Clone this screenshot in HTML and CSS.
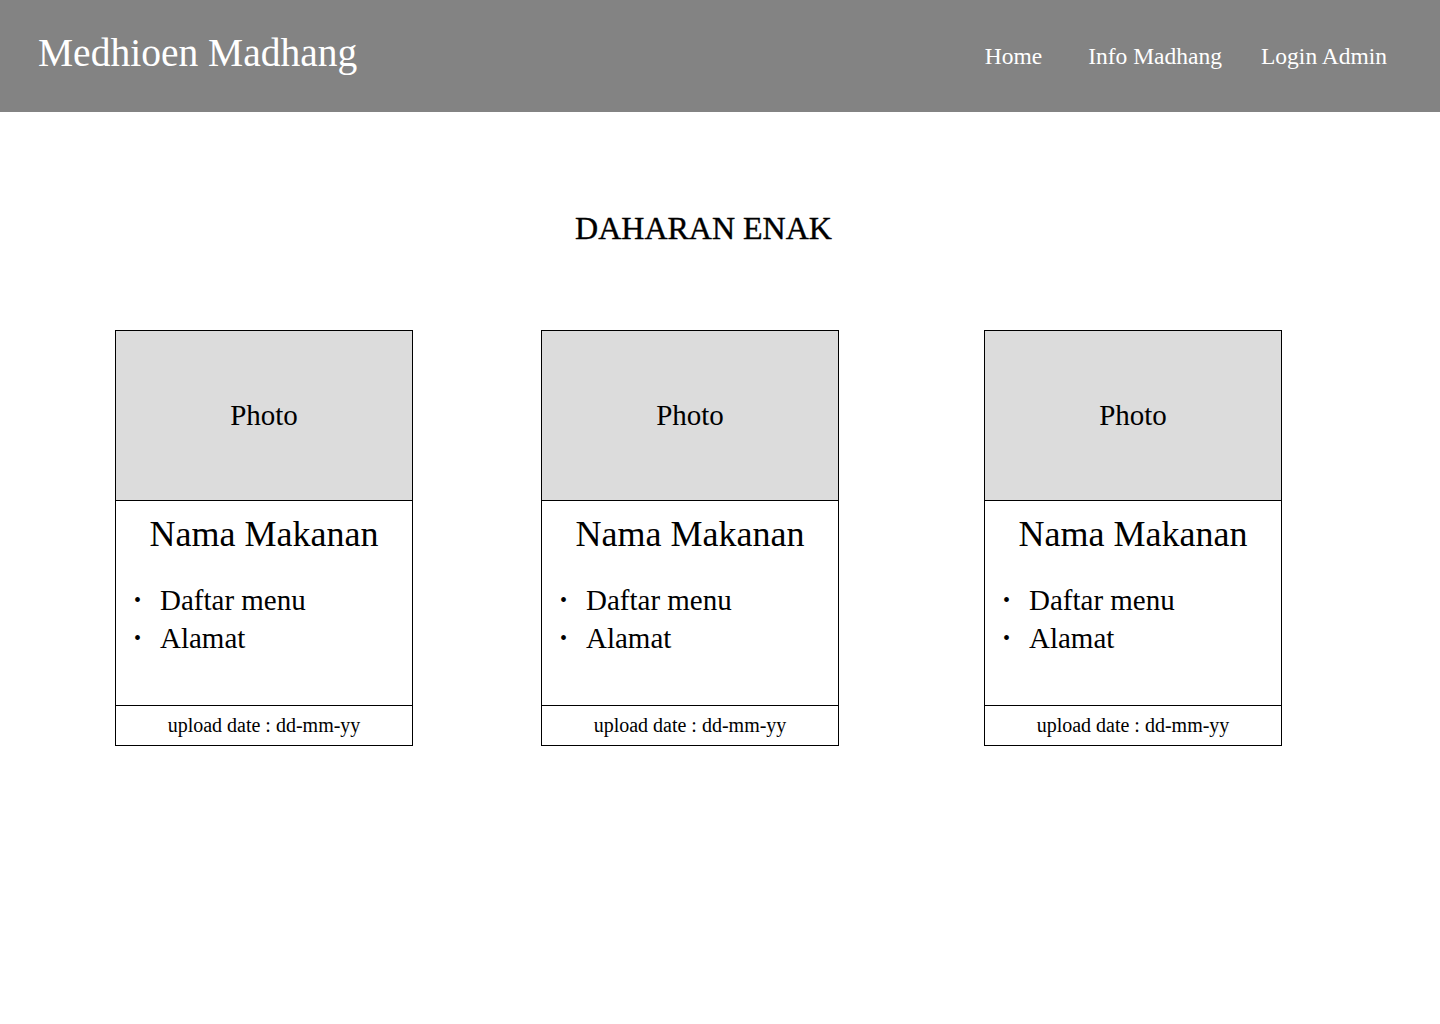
FILE: index.html
```html
<!DOCTYPE html>
<html lang="id">
<head>
<meta charset="utf-8">
<title>Medhioen Madhang</title>
<link rel="stylesheet" href="styles.css">
</head>
<body>
<header class="topbar">
  <div class="brand">Medhioen Madhang</div>
  <nav class="nav">
    <a class="nav-link nav-home" href="#">Home</a>
    <a class="nav-link" href="#">Info Madhang</a>
    <a class="nav-link" href="#">Login Admin</a>
  </nav>
</header>
<main class="content">
  <h1 class="page-title">DAHARAN ENAK</h1>
  <section class="cards">
    <article class="card">
      <div class="card-photo">Photo</div>
      <div class="card-body">
        <h2 class="card-name">Nama Makanan</h2>
        <ul class="card-list">
          <li>Daftar menu</li>
          <li>Alamat</li>
        </ul>
      </div>
      <div class="card-footer">upload date : dd-mm-yy</div>
    </article>
    <article class="card">
      <div class="card-photo">Photo</div>
      <div class="card-body">
        <h2 class="card-name">Nama Makanan</h2>
        <ul class="card-list">
          <li>Daftar menu</li>
          <li>Alamat</li>
        </ul>
      </div>
      <div class="card-footer">upload date : dd-mm-yy</div>
    </article>
    <article class="card card-last">
      <div class="card-photo">Photo</div>
      <div class="card-body">
        <h2 class="card-name">Nama Makanan</h2>
        <ul class="card-list">
          <li>Daftar menu</li>
          <li>Alamat</li>
        </ul>
      </div>
      <div class="card-footer">upload date : dd-mm-yy</div>
    </article>
  </section>
</main>
</body>
</html>
```
FILE: styles.css
```css
* { box-sizing: border-box; }

body {
  margin: 0;
  background: #ffffff;
  color: #000000;
  font-family: "Liberation Serif", "DejaVu Serif", serif;
}

.topbar {
  height: 112px;
  background: #838383;
  display: flex;
  align-items: center;
  justify-content: space-between;
  padding: 0 53px 0 38px;
}

.brand {
  color: #ffffff;
  font-size: 39.5px;
  line-height: 40px;
  margin-bottom: 6px;
}

.nav {
  display: flex;
  gap: 39px;
}

.nav-link {
  color: #ffffff;
  text-decoration: none;
  font-size: 23.5px;
  line-height: 24px;
}

.nav-home { margin-right: 7px; }

.content {
  padding-top: 100px;
}

.page-title {
  margin: 0;
  text-align: center;
  font-size: 32px;
  line-height: 32px;
  font-weight: normal;
  padding-right: 33px;
  -webkit-text-stroke: 0.4px #000;
}

.cards {
  display: flex;
  gap: 128px;
  padding-left: 115px;
  margin-top: 86px;
}

.card {
  width: 298px;
  border: 1px solid #000;
  display: flex;
  flex-direction: column;
}

.card-last { margin-left: 17px; }

.card-photo {
  height: 170px;
  background: #dcdcdc;
  border-bottom: 1px solid #000;
  display: flex;
  align-items: center;
  justify-content: center;
  font-size: 29px;
}

.card-body {
  height: 205px;
  border-bottom: 1px solid #000;
  padding-top: 15px;
}

.card-name {
  margin: 0;
  text-align: center;
  font-size: 36px;
  line-height: 36px;
  font-weight: normal;
}

.card-list {
  list-style: none;
  margin: 29px 0 0;
  padding: 0 0 0 18px;
}

.card-list li {
  display: flex;
  align-items: baseline;
  font-size: 29px;
  line-height: 38px;
}

.card-list li::before {
  content: "\2022";
  font-size: 20px;
  line-height: 1;
  width: 26px;
  flex: none;
  position: relative;
  top: -3px;
}

.card-footer {
  height: 39px;
  display: flex;
  align-items: center;
  justify-content: center;
  font-size: 20px;
}
```
